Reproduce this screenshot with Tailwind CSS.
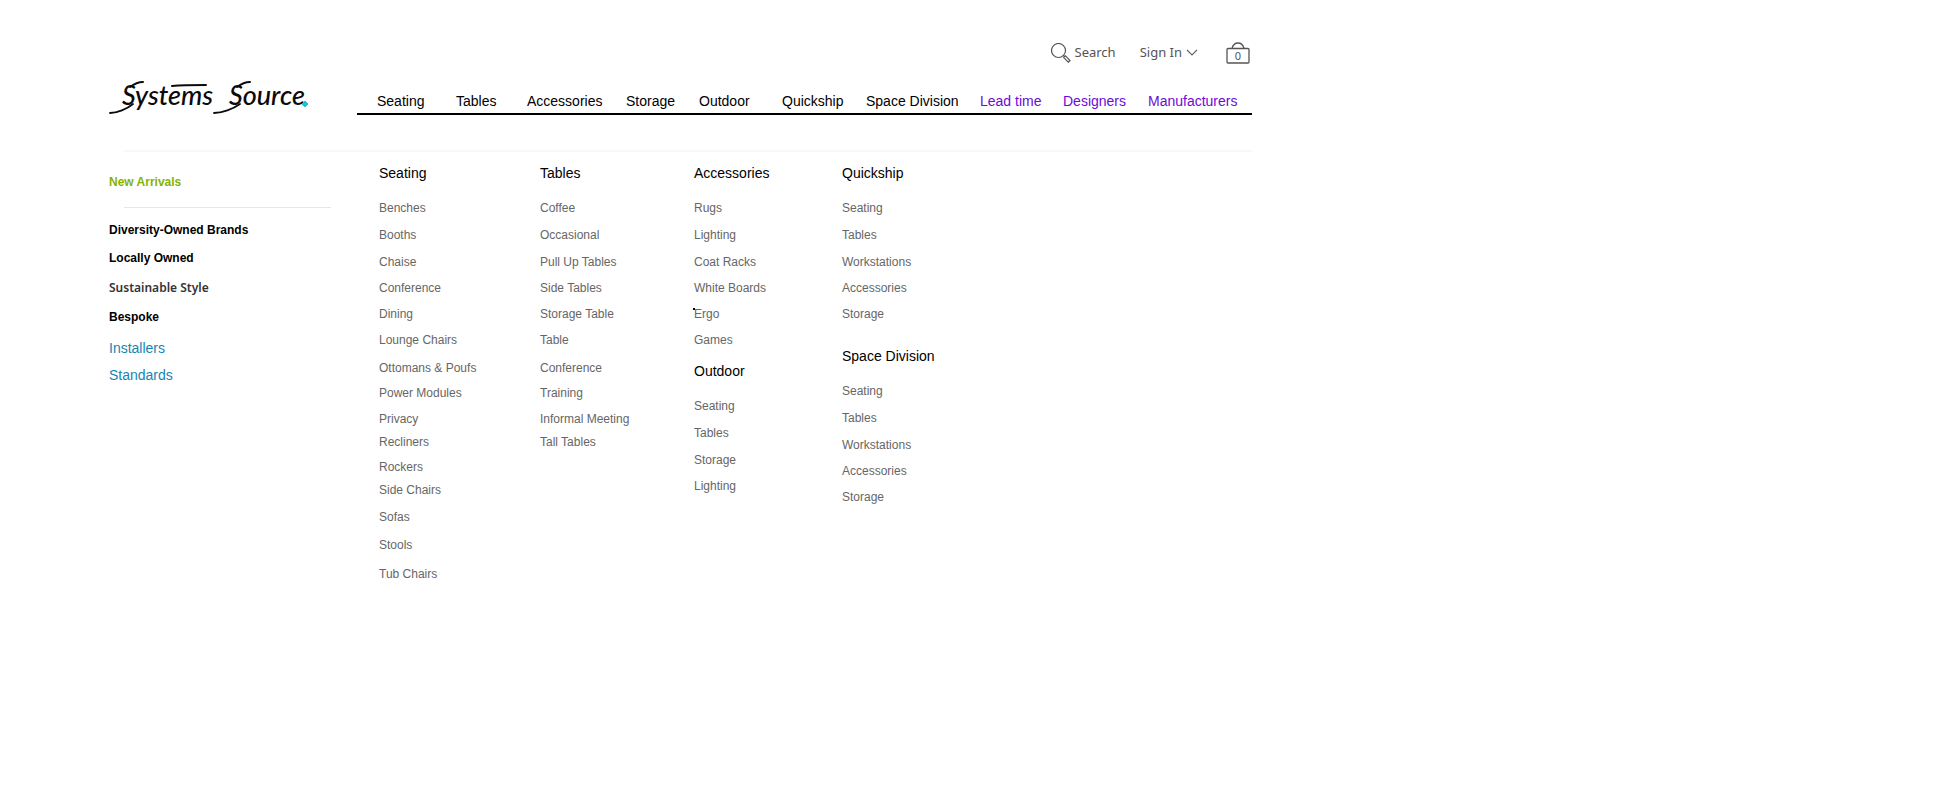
<!DOCTYPE html>
<html lang="en">
<head>
<meta charset="utf-8">
<meta name="viewport" content="width=device-width, initial-scale=1">
<title>Systems Source</title>
<script src="https://cdn.jsdelivr.net/npm/@tailwindcss/browser@4"></script>
</head>
<body class="min-h-screen bg-white font-['Liberation_Sans',Arial,sans-serif] text-black">
<div class="w-full max-w-[1252px] pl-[109px]">
  <header class="flex items-end pt-[39px]">
    <a href="#" aria-label="Systems Source" class="w-[248px] shrink-0">
      <svg width="204" height="40" viewBox="0 0 204 40" class="block overflow-visible">
        <g fill="#0b0b0b" font-family="Lato, sans-serif" font-style="italic" font-weight="500">
          <text x="13" y="30" font-size="27">Systems</text>
          <text x="120" y="30" font-size="27">Source</text>
        </g>
        <!-- flourishes: tails under both capitals, their upper strokes, and the long crossbar -->
        <g fill="none" stroke="#0b0b0b" stroke-linecap="round">
          <path stroke-width="1.800" d="M1 38C8 38 18 34 24 29"/>
          <path stroke-width="1.800" d="M105 38C113 38 124 34 131 29"/>
          <path stroke-width="2" d="M63 11C74 10 86 10 97 10"/>
          <path stroke-width="2" d="M21 12C25 9 30 7 34 7"/>
          <path stroke-width="2" d="M128 12C132 9 137 7 141 7"/>
        </g>
        <path d="M196 26l3 3-3 3-3-3z" fill="#1fc0d8" stroke="#1fc0d8"/>
      </svg>
    </a>
    <div class="min-w-0 flex-1">
      <div class="flex h-7 items-center justify-end pr-0.5 font-['Noto_Sans',sans-serif] text-[13px] text-[#555]">
        <button type="button" class="mr-6 flex items-center gap-1">
          <svg width="20" height="20" viewBox="0 0 20 20" fill="none" stroke="#555" stroke-width="1.2">
            <circle cx="7.5" cy="7.5" r="7"/>
            <path d="M12.500 12.500l1.500 1.500M14.500 12.800l4.500 4.700-1.700 1.700-4.600-4.600z"/>
          </svg>
          Search
        </button>
        <button type="button" class="mr-7 flex items-center gap-1">
          Sign In
          <svg width="12" height="8" viewBox="0 0 12 8" fill="none" stroke="#666" stroke-width="1.2"><path d="M1 1l5 5 5-5"/></svg>
        </button>
        <button type="button" aria-label="Bag, 0 items">
          <svg width="24" height="22" viewBox="0 0 24 22" fill="none" stroke="#555" stroke-width="1.3">
            <rect x="1" y="6.500" width="22" height="14.500" rx="1"/>
            <path d="M6 6.500C7 2.500 9 1 12 1s5 1.500 6 5.500"/>
            <text x="12" y="18" text-anchor="middle" font-size="11" fill="#555" stroke="none">0</text>
          </svg>
        </button>
      </div>
      <nav aria-label="Main" class="mt-6 grid grid-cols-[79px_71px_99px_73px_83px_84px_114px_83px_85px_1fr] border-b-2 border-black pb-0.5 pl-5 text-sm/5 whitespace-nowrap">
        <a href="#">Seating</a>
        <a href="#">Tables</a>
        <a href="#">Accessories</a>
        <a href="#">Storage</a>
        <a href="#">Outdoor</a>
        <a href="#">Quickship</a>
        <a href="#">Space Division</a>
        <a href="#" class="text-[#6d0ad6]">Lead time</a>
        <a href="#" class="text-[#6d0ad6]">Designers</a>
        <a href="#" class="text-[#6d0ad6]">Manufacturers</a>
      </nav>
    </div>
  </header>
  <hr class="mt-[35px] ml-[15px] border-t-2 border-[#f8f8f8]">
  <div class="flex">
    <aside class="w-[270px] shrink-0 pt-5 text-xs/5 font-bold">
      <a href="#" class="text-[#86b300]">New Arrivals</a>
      <hr class="mt-[15px] mr-12 ml-[15px] border-[#e6e6e6]">
      <ul class="grid grid-rows-[28px_30px_29px_31px_27px_20px] pt-3">
        <li><a href="#">Diversity-Owned Brands</a></li>
        <li><a href="#">Locally Owned</a></li>
        <li><a href="#" class="font-['Noto_Sans',sans-serif] font-semibold text-[#333]">Sustainable Style</a></li>
        <li><a href="#">Bespoke</a></li>
        <li class="text-sm/5 font-normal text-[#1486b4]"><a href="#">Installers</a></li>
        <li class="text-sm/5 font-normal text-[#1486b4]"><a href="#">Standards</a></li>
      </ul>
    </aside>
    <main class="grid flex-1 grid-cols-[161px_154px_148px_1fr] pt-[11px] text-xs/5 text-[#666]">
      <section>
        <h2 class="mb-[15px] text-sm/5 text-black">Seating</h2>
        <ul class="grid grid-rows-[27px_27px_26px_26px_26px_28px_25px_26px_23px_25px_23px_27px_28px_29px_20px]">
          <li><a href="#">Benches</a></li>
          <li><a href="#">Booths</a></li>
          <li><a href="#">Chaise</a></li>
          <li><a href="#">Conference</a></li>
          <li><a href="#">Dining</a></li>
          <li><a href="#">Lounge Chairs</a></li>
          <li><a href="#">Ottomans &amp; Poufs</a></li>
          <li><a href="#">Power Modules</a></li>
          <li><a href="#">Privacy</a></li>
          <li><a href="#">Recliners</a></li>
          <li><a href="#">Rockers</a></li>
          <li><a href="#">Side Chairs</a></li>
          <li><a href="#">Sofas</a></li>
          <li><a href="#">Stools</a></li>
          <li><a href="#">Tub Chairs</a></li>
        </ul>
      </section>
      <section>
        <h2 class="mb-[15px] text-sm/5 text-black">Tables</h2>
        <ul class="grid grid-rows-[27px_27px_26px_26px_26px_28px_25px_26px_23px_20px]">
          <li><a href="#">Coffee</a></li>
          <li><a href="#">Occasional</a></li>
          <li><a href="#">Pull Up Tables</a></li>
          <li><a href="#">Side Tables</a></li>
          <li><a href="#">Storage Table</a></li>
          <li><a href="#">Table</a></li>
          <li><a href="#">Conference</a></li>
          <li><a href="#">Training</a></li>
          <li><a href="#">Informal Meeting</a></li>
          <li><a href="#">Tall Tables</a></li>
        </ul>
      </section>
      <div class="flex flex-col gap-[11px]">
        <section>
          <h2 class="mb-[15px] text-sm/5 text-black">Accessories</h2>
          <ul class="grid grid-rows-[27px_27px_26px_26px_26px_20px]">
            <li><a href="#">Rugs</a></li>
            <li><a href="#">Lighting</a></li>
            <li><a href="#">Coat Racks</a></li>
            <li><a href="#">White Boards</a></li>
            <li class="relative"><span class="absolute top-1 -left-px size-0.5 bg-black"></span><a href="#">Ergo</a></li>
            <li><a href="#">Games</a></li>
          </ul>
        </section>
        <section>
          <h2 class="mb-[15px] text-sm/5 text-black">Outdoor</h2>
          <ul class="grid grid-rows-[27px_27px_26px_20px]">
            <li><a href="#">Seating</a></li>
            <li><a href="#">Tables</a></li>
            <li><a href="#">Storage</a></li>
            <li><a href="#">Lighting</a></li>
          </ul>
        </section>
      </div>
      <div class="flex flex-col gap-[22px]">
        <section>
          <h2 class="mb-[15px] text-sm/5 text-black">Quickship</h2>
          <ul class="grid grid-rows-[27px_27px_26px_26px_20px]">
            <li><a href="#">Seating</a></li>
            <li><a href="#">Tables</a></li>
            <li><a href="#">Workstations</a></li>
            <li><a href="#">Accessories</a></li>
            <li><a href="#">Storage</a></li>
          </ul>
        </section>
        <section>
          <h2 class="mb-[15px] text-sm/5 text-black">Space Division</h2>
          <ul class="grid grid-rows-[27px_27px_26px_26px_20px]">
            <li><a href="#">Seating</a></li>
            <li><a href="#">Tables</a></li>
            <li><a href="#">Workstations</a></li>
            <li><a href="#">Accessories</a></li>
            <li><a href="#">Storage</a></li>
          </ul>
        </section>
      </div>
    </main>
  </div>
</div>
</body>
</html>
